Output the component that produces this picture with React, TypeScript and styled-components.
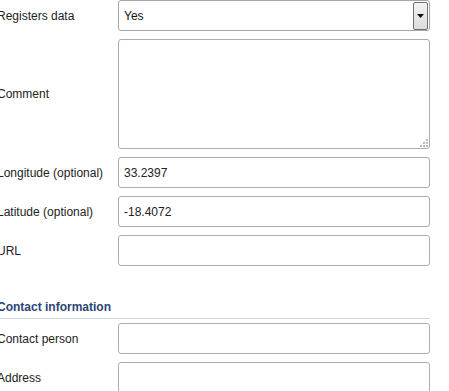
import styled, { createGlobalStyle } from 'styled-components';

const GlobalStyle = createGlobalStyle`
    html, body {
        margin: 0;
        padding: 0;
        background: #fff;
    }
    body {
        font-family: "Liberation Sans", Arial, sans-serif;
        font-size: 12px;
        color: #222;
        overflow: hidden;
    }
`;

const fields = [
    { id: 'lon', label: 'Longitude (optional)', value: '33.2397' },
    { id: 'lat', label: 'Latitude (optional)', value: '-18.4072' },
    { id: 'url', label: 'URL', value: '' },
];

const contactFields = [
    { id: 'person', label: 'Contact person', value: '' },
    { id: 'address', label: 'Address', value: '' },
];

export default function App() {
    return (
        <>
            <GlobalStyle />
            <Form>
                <Row>
                    <Label>Registers data</Label>
                    <Select>
                        <SelectText>Yes</SelectText>
                        <DropButton>
                            <svg width="7" height="4" viewBox="0 0 7 4">
                                <path d="M0 0 H7 L3.5 4 Z" fill="#111" />
                            </svg>
                        </DropButton>
                    </Select>
                </Row>
                <Row>
                    <Label>Comment</Label>
                    <TextArea>
                        <Grip>
                            <svg width="9" height="9" viewBox="0 0 9 9">
                                <rect x="7" y="1" width="2" height="2" fill="#bbb" />
                                <rect x="4" y="4" width="2" height="2" fill="#bbb" />
                                <rect x="7" y="4" width="2" height="2" fill="#bbb" />
                                <rect x="1" y="7" width="2" height="2" fill="#bbb" />
                                <rect x="4" y="7" width="2" height="2" fill="#bbb" />
                                <rect x="7" y="7" width="2" height="2" fill="#bbb" />
                            </svg>
                        </Grip>
                    </TextArea>
                </Row>
                {fields.map(f => (
                    <Row key={f.id}>
                        <Label>{f.label}</Label>
                        <Input>{f.value}</Input>
                    </Row>
                ))}
                <SectionTitle>Contact information</SectionTitle>
                {contactFields.map(f => (
                    <Row key={f.id}>
                        <Label>{f.label}</Label>
                        <Input>{f.value}</Input>
                    </Row>
                ))}
            </Form>
        </>
    );
}

const Form = styled.div`
    display: flex;
    flex-direction: column;
    gap: 8px;
    width: 433px;
    margin-left: -3px;
`;

const Row = styled.div`
    display: grid;
    grid-template-columns: 121px 312px;
    align-items: center;
`;

const Label = styled.div`
    font-size: 12px;
    color: #222;
    white-space: nowrap;
`;

const Box = styled.div`
    box-sizing: border-box;
    border: 1px solid #acacac;
    border-radius: 3px;
    background: #fff;
`;

const Select = styled(Box)`
    height: 31px;
    display: flex;
    align-items: center;
    justify-content: space-between;
    padding: 1px 1px 1px 5px;
    border-color: #a6a6a6;
`;

const SelectText = styled.span`
    font-size: 12px;
    color: #111;
`;

const DropButton = styled.div`
    box-sizing: border-box;
    width: 15px;
    height: 28px;
    border: 1px solid #6f6f6f;
    border-radius: 2px;
    background: linear-gradient(#f4f4f4, #dcdcdc);
    display: flex;
    align-items: center;
    justify-content: center;
`;

const TextArea = styled(Box)`
    height: 110px;
    position: relative;
`;

const Grip = styled.div`
    position: absolute;
    right: 1px;
    bottom: 1px;
    line-height: 0;
`;

const Input = styled(Box)`
    height: 31px;
    display: flex;
    align-items: center;
    padding: 0 5px;
    font-size: 12px;
    color: #222;
`;

const SectionTitle = styled.div`
    margin-top: 26px;
    padding-bottom: 4px;
    border-bottom: 1px solid #d3d9e2;
    font-size: 12px;
    font-weight: bold;
    color: #2c4674;
    width: 433px;
    margin-bottom: -4px;
`;
